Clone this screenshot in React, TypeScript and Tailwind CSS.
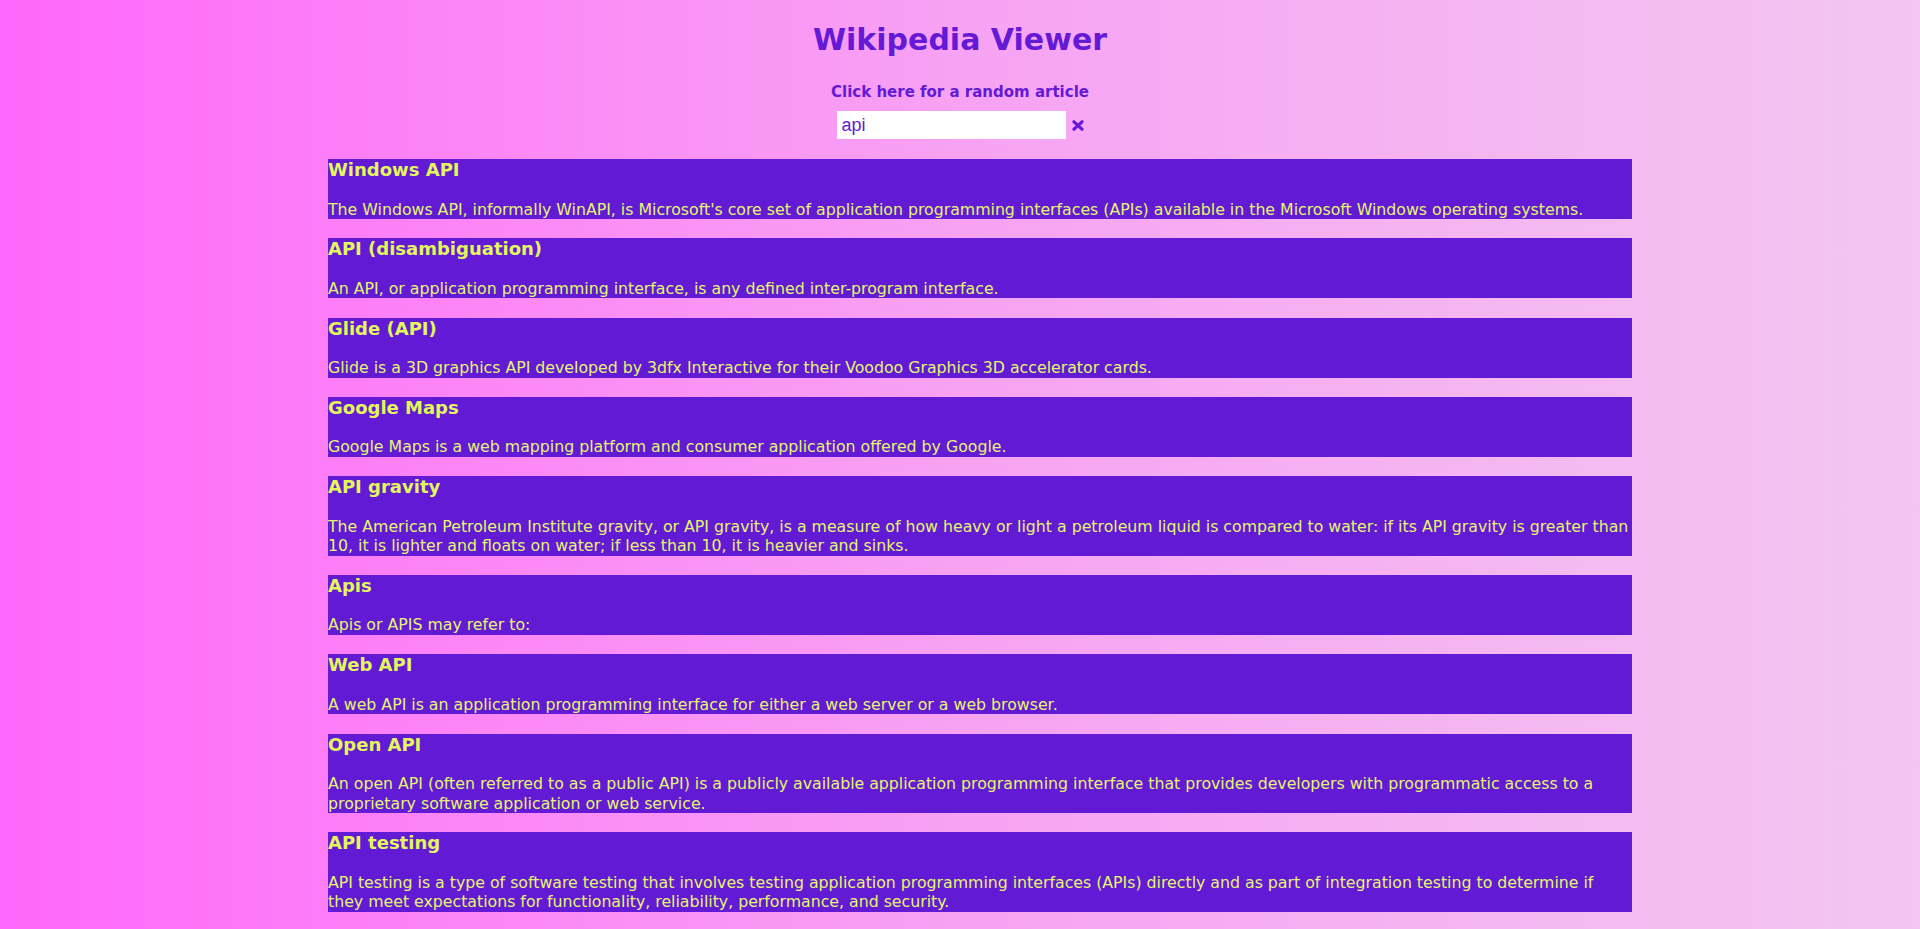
import React from "react";

const results = [
  {
    title: "Windows API",
    desc: "The Windows API, informally WinAPI, is Microsoft's core set of application programming interfaces (APIs) available in the Microsoft Windows operating systems.",
  },
  {
    title: "API (disambiguation)",
    desc: "An API, or application programming interface, is any defined inter-program interface.",
  },
  {
    title: "Glide (API)",
    desc: "Glide is a 3D graphics API developed by 3dfx Interactive for their Voodoo Graphics 3D accelerator cards.",
  },
  {
    title: "Google Maps",
    desc: "Google Maps is a web mapping platform and consumer application offered by Google.",
  },
  {
    title: "API gravity",
    desc: "The American Petroleum Institute gravity, or API gravity, is a measure of how heavy or light a petroleum liquid is compared to water: if its API gravity is greater than 10, it is lighter and floats on water; if less than 10, it is heavier and sinks.",
  },
  { title: "Apis", desc: "Apis or APIS may refer to:" },
  {
    title: "Web API",
    desc: "A web API is an application programming interface for either a web server or a web browser.",
  },
  {
    title: "Open API",
    desc: "An open API (often referred to as a public API) is a publicly available application programming interface that provides developers with programmatic access to a proprietary software application or web service.",
  },
  {
    title: "API testing",
    desc: "API testing is a type of software testing that involves testing application programming interfaces (APIs) directly and as part of integration testing to determine if they meet expectations for functionality, reliability, performance, and security.",
  },
];

export default function App() {
  return (
    <div
      className="min-h-[929px] w-full bg-gradient-to-r from-[#ff66fa] via-[#f7a2f3] to-[#f2c6f0]"
      style={{ fontFamily: '"DejaVu Sans", "Open Sans", sans-serif' }}
    >
      <div className="flex flex-col items-center pt-[20px]">
        <h1 className="text-[30px] leading-[40px] font-bold text-[#6419d6]">Wikipedia Viewer</h1>
        <a className="mt-[21.5px] text-[15px] leading-[20px] font-bold text-[#6419d6]">
          Click here for a random article
        </a>
        <div className="mt-[9.5px] flex items-center gap-[6px]">
          <div
            className="w-[229px] h-[28px] bg-white flex items-center px-[5px] text-[18px] text-[#6419d6]"
            style={{ fontFamily: '"Liberation Sans", Arial, sans-serif' }}
          >
            api
          </div>
          <svg width="12" height="11" viewBox="0 0 12 11" className="mt-[1px]">
            <path d="M2 1.8 L10 9.2 M10 1.8 L2 9.2" stroke="#6419d6" strokeWidth="3.2" strokeLinecap="round" />
          </svg>
        </div>
      </div>
      <div className="ml-[328px] w-[1304px] mt-[20px] flex flex-col gap-[19.3px] pb-[20px]">
        {results.map((r) => (
          <div key={r.title} className="bg-[#621ad4] text-[#e3f65c]">
            <div className="text-[18px] leading-[22px] font-bold">{r.title}</div>
            <div className="mt-[18.5px] text-[15.75px] leading-[19.5px] text-[#e6f56e]">{r.desc}</div>
          </div>
        ))}
      </div>
    </div>
  );
}
